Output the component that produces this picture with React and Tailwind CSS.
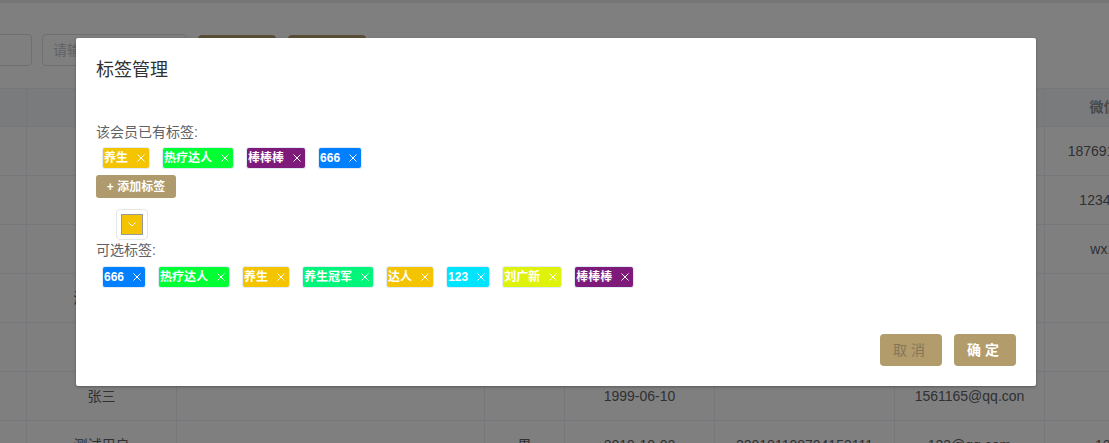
import React from "react";

const ownedTags = [
  { label: "养生", bg: "bg-[#f5c400]" },
  { label: "热疗达人", bg: "bg-[#00ff33]" },
  { label: "棒棒棒", bg: "bg-[#7e1a7a]" },
  { label: "666", bg: "bg-[#0080ff]" },
];

const optionalTags = [
  { label: "666", bg: "bg-[#0080ff]" },
  { label: "热疗达人", bg: "bg-[#00ff33]" },
  { label: "养生", bg: "bg-[#f5c400]" },
  { label: "养生冠军", bg: "bg-[#00f57a]" },
  { label: "达人", bg: "bg-[#f5c400]" },
  { label: "123", bg: "bg-[#00e5ff]" },
  { label: "刘广新", bg: "bg-[#dff20c]" },
  { label: "棒棒棒", bg: "bg-[#7e1a7a]" },
];

const colW = [
  "w-[27px]",
  "w-[150px]",
  "w-[308px]",
  "w-[80px]",
  "w-[150px]",
  "w-[180px]",
  "w-[150px]",
  "w-[132px]",
  "w-[150px]",
];

const header = ["", "姓名", "地址", "性别", "生日", "身份证号", "邮箱", "微信号", "操作"];

const rows = [
  ["", "小王", "", "男", "1990-01-01", "", "", "18769123456", ""],
  ["", "李四", "", "女", "1995-05-05", "", "", "12345678", ""],
  ["", "王五", "", "男", "1992-03-12", "", "", "wx123", ""],
  ["", "测试会员", "", "", "", "", "", "", ""],
  ["", "", "", "", "", "", "", "", ""],
  ["", "张三", "", "", "1999-06-10", "", "1561165@qq.con", "", ""],
  ["", "测试用户", "", "男", "2019-10-02", "220181198704152111", "123@qq.com", "1234", ""],
];

function Close() {
  return (
    <svg width="8" height="8" viewBox="0 0 8 8" className="ml-[9px] shrink-0">
      <path d="M0.5 0.5L7.5 7.5M7.5 0.5L0.5 7.5" stroke="#ffffff" strokeWidth="1" fill="none" />
    </svg>
  );
}

function Tag({ label, bg }) {
  return (
    <span
      className={`mx-[6px] my-[5px] inline-flex h-[22px] items-center rounded-[3px] border border-[#e3ebf5] pl-[1px] pr-[4px] text-[12px] font-bold leading-none text-white ${bg}`}
    >
      <span>{label}</span>
      <Close />
    </span>
  );
}

function Row({ cells, head }) {
  return (
    <div
      className={`flex shrink-0 border-b border-[#ebeef5] ${
        head ? "h-[39px] border-t bg-[#f5f7fa] font-bold text-[#909399]" : "h-[49px] text-[#606266]"
      }`}
    >
      {cells.map((c, i) => (
        <div
          key={i}
          className={`flex shrink-0 items-center justify-center overflow-hidden whitespace-nowrap border-r border-[#ebeef5] text-[14px] ${colW[i]}`}
        >
          {c}
        </div>
      ))}
    </div>
  );
}

export default function App() {
  return (
    <div className="relative h-[443px] w-[1109px] overflow-hidden bg-white [font-family:'Liberation_Sans','Noto_Sans_CJK_SC',sans-serif]">
      {/* page underneath */}
      <div className="h-[3px] bg-[#ececec]" />
      <div className="flex items-start pt-[31px]">
        <div className="ml-[-120px] h-[32px] w-[152px] shrink-0 rounded-[4px] border border-[#dcdfe6]" />
        <div className="ml-[10px] flex h-[32px] w-[145px] shrink-0 items-center rounded-[4px] border border-[#dcdfe6] pl-[10px] text-[14px] text-[#c0c4cc]">
          请输入手机号
        </div>
        <div className="ml-[11px] mt-[1px] flex h-[32px] w-[78px] shrink-0 items-center justify-center rounded-[4px] bg-[#b39c6c] text-[14px] text-white">
          查询
        </div>
        <div className="ml-[12px] mt-[1px] flex h-[32px] w-[78px] shrink-0 items-center justify-center rounded-[4px] bg-[#b39c6c] text-[14px] text-white">
          重置
        </div>
      </div>
      <div className="mt-[21px] flex flex-col">
        <Row cells={header} head />
        {rows.map((r, i) => (
          <Row key={i} cells={r} />
        ))}
      </div>

      {/* overlay */}
      <div className="absolute inset-0 bg-black/50" />

      {/* dialog */}
      <div className="absolute left-[76px] top-[38px] w-[960px] rounded-[2px] bg-white shadow-[0_1px_3px_rgba(0,0,0,0.3)]">
        <div className="px-[20px] pb-[10px] pt-[20px] text-[18px] leading-[24px] text-[#303133]">标签管理</div>
        <div className="px-[20px] pb-[31px] pt-[30px]">
          <div className="h-5 text-[14px] leading-5 text-[#606266]">该会员已有标签:</div>
          <div className="flex flex-wrap">
            {ownedTags.map((t, i) => (
              <Tag key={i} {...t} />
            ))}
          </div>
          <div className="mt-[1px] flex h-[23px] w-[80px] items-center justify-center rounded-[3px] bg-[#ae9a6c] text-[12px] font-bold text-white">
            + 添加标签
          </div>
          <div className="ml-[20px] mt-[11px] flex h-[31px] w-[32px] items-center justify-center rounded-[4px] border border-[#e6e6e6]">
            <div className="flex h-[21px] w-[22px] items-center justify-center border border-[#999999] bg-[#f5c400]">
              <svg width="8" height="5" viewBox="0 0 8 5">
                <path d="M0.5 0.5L4 4L7.5 0.5" stroke="#ffffff" strokeWidth="1" fill="none" />
              </svg>
            </div>
          </div>
          <div className="h-5 text-[14px] leading-5 text-[#606266]">可选标签:</div>
          <div className="mt-[1px] flex flex-wrap">
            {optionalTags.map((t, i) => (
              <Tag key={i} {...t} />
            ))}
          </div>
        </div>
        <div className="flex justify-end gap-3 px-[20px] pb-[20px] pt-[10px]">
          <div className="flex h-[32px] w-[62px] items-center justify-center rounded-[4px] bg-[#b39c6c] text-[14px] tracking-[4px] text-[#857559]">
            取消
          </div>
          <div className="flex h-[32px] w-[62px] items-center justify-center rounded-[4px] bg-[#b39c6c] text-[14px] font-bold tracking-[4px] text-white">
            确定
          </div>
        </div>
      </div>
    </div>
  );
}
